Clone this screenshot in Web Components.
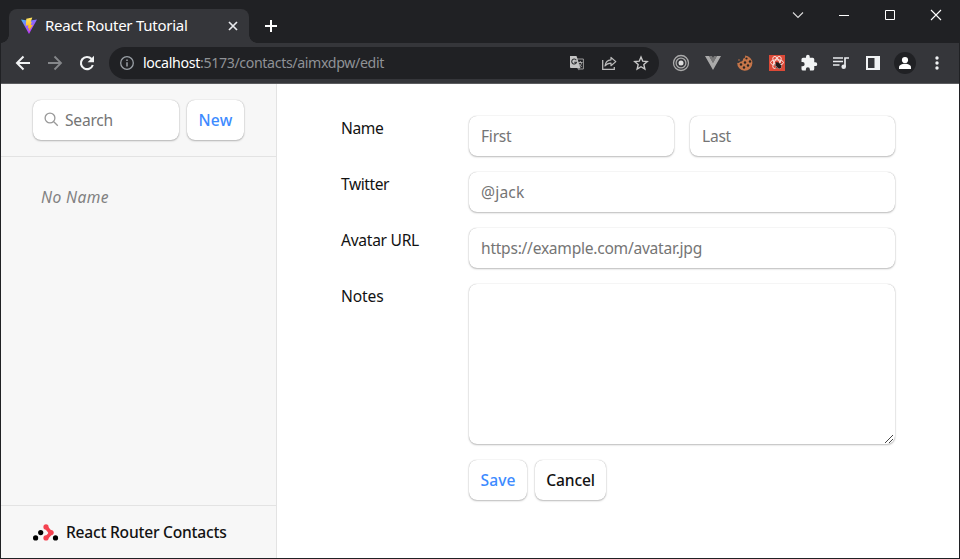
<!DOCTYPE html>
<html lang="en"><head><meta charset="utf-8"><title>React Router Tutorial</title>
<style>
html,body{margin:0;height:100%;overflow:hidden}
body{font-family:"Noto Sans","Open Sans",sans-serif;font-size:15.6px;line-height:24px;color:#121212;background:#202124}
</style></head><body>
<browser-window></browser-window>
<script>
const define=(name,html,setup)=>{
  const t=document.createElement('template');t.innerHTML=html;
  customElements.define(name,class extends HTMLElement{
    connectedCallback(){
      if(this.shadowRoot)return;
      this.attachShadow({mode:'open'}).append(t.content.cloneNode(true));
      if(setup)setup(this);
    }
  });
};

/* Text tracked so that it fills the width given in "w". */
define('fit-text',`<style>:host{display:inline-block;white-space:pre;flex:none}span{display:inline-block}</style><span><slot></slot></span>`,el=>{
  const w=+el.getAttribute('w'),s=el.shadowRoot.querySelector('span');
  const n=el.textContent.length,natural=s.getBoundingClientRect().width;
  s.style.letterSpacing=((w-natural)/n)+'px';
  el.style.width=w+'px';
});

const icons={
  vite:'<svg width="18" height="18" viewBox="0 0 18 18"><defs><linearGradient id="a" x1="0" y1="0" x2=".6" y2="1"><stop stop-color="#41bdf5"/><stop offset=".45" stop-color="#8b6cff"/><stop offset="1" stop-color="#c12fff"/></linearGradient><linearGradient id="b" x1="0" y1="0" x2="0" y2="1"><stop stop-color="#ffe766"/><stop offset="1" stop-color="#ffa800"/></linearGradient></defs><path d="M1 2.5 9 3.800l8-1.300L9 17z" fill="url(#a)"/><path d="M12.300 .500 6.300 1.800 5.800 8.700l2.600-.4-.6 3.200 1.600-.4-.8 3.700 4.400-7-2.300.4 1-3.300-1 .2z" fill="url(#b)"/></svg>',
  x:'<svg width="16" height="16" viewBox="0 0 16 16"><path d="m4 4 8 8m0-8-8 8" stroke="#e8eaed" stroke-width="1.7"/></svg>',
  plus:'<svg width="16" height="16" viewBox="0 0 16 16"><path d="M8 2v12M2 8h12" stroke="#fff" stroke-width="2"/></svg>',
  down:'<svg width="16" height="16" viewBox="0 0 16 16"><path d="m3 5.5 5 5 5-5" fill="none" stroke="#ddd" stroke-width="1.1"/></svg>',
  min:'<svg width="16" height="16" viewBox="0 0 16 16"><path d="M3 8.5h10" stroke="#fff"/></svg>',
  max:'<svg width="16" height="16" viewBox="0 0 16 16"><path d="M3.500 3.500h9v9h-9z" fill="none" stroke="#fff"/></svg>',
  quit:'<svg width="16" height="16" viewBox="0 0 16 16"><path d="m3 3 10 10m0-10L3 13" stroke="#fff" stroke-width="1.1"/></svg>',
  back:'<svg width="18" height="18" viewBox="0 0 18 18"><path d="M16 9H3m6.500-6.500L3 9l6.500 6.500" fill="none" stroke="#f1f3f4" stroke-width="2"/></svg>',
  forward:'<svg width="18" height="18" viewBox="0 0 18 18"><path d="M2 9h13M8.500 2.500 15 9l-6.500 6.500" fill="none" stroke="#85878a" stroke-width="1.8"/></svg>',
  reload:'<svg width="18" height="18" viewBox="0 0 18 18"><path d="M14.800 11A6.100 6.100 0 1 1 13.600 5" fill="none" stroke="#f1f3f4" stroke-width="2.100"/><path d="M16 1.800v6.400H9.600z" fill="#f1f3f4"/></svg>',
  info:'<svg width="16" height="16" viewBox="0 0 16 16"><circle cx="8" cy="8" r="6.300" fill="none" stroke="#9aa0a6" stroke-width="1.300"/><path d="M8 7.200v4.200M8 4.500V6" stroke="#9aa0a6" stroke-width="1.500"/></svg>',
  translate:'<svg width="16" height="16" viewBox="0 0 16 16"><path d="M6 4h8.400v10H9.500" fill="none" stroke="#999" stroke-width="1"/><path d="M1 1h6.500l4 12H2a1 1 0 0 1-1-1z" fill="#c4c4c4"/><path d="M7.300 5.200A2.500 2.500 0 1 0 7.600 7.200H5.200" fill="none" stroke="#303134" stroke-width="1.100"/><path d="M9 7.500h4.500M11.300 6v1.500m1.400 0c-.3 1.800-1.300 3-2.700 4m-.2-3c.5 1.500 1.500 2.500 3 3" fill="none" stroke="#aaa"/><path d="m8 13 2 2.500.8-2.500" fill="#888"/></svg>',
  share:'<svg width="16" height="16" viewBox="0 0 16 16"><path d="M1.700 5v9.300h11.600V12" fill="none" stroke="#bbb" stroke-width="1.300"/><path d="M10 2.500v2.300C6.500 5 4.500 7.200 4 11c1.500-2 3.200-2.800 6-2.800v2.500l4.800-4.100z" fill="none" stroke="#bbb" stroke-width="1.200" stroke-linejoin="round"/></svg>',
  star:'<svg width="16" height="16" viewBox="0 0 16 16"><path d="m8 2 1.750 4.200 4.500.4-3.400 3 1 4.400L8 11.700 4.150 14l1-4.400-3.400-3 4.500-.4z" fill="none" stroke="#c8c8c8" stroke-width="1.400"/></svg>',
  target:'<svg width="18" height="18" viewBox="0 0 18 18" fill="none" stroke="#aaa" stroke-width="1.300"><circle cx="9" cy="9" r="7.500"/><circle cx="9" cy="9" r="4.900"/><circle cx="9" cy="9" r="2.500" fill="#ddd" stroke="none"/></svg>',
  vue:'<svg width="18" height="18" viewBox="0 0 18 18"><path d="M1 2h4.200L9 8.700 12.800 2H17L9 16z" fill="#aaa"/><path d="M5 2h3l1 1.700L10 2h3L9 9z" fill="#777"/></svg>',
  cookie:'<svg width="18" height="18" viewBox="0 0 18 18"><path d="M9 1.500a2.600 2.600 0 0 1-2 3.200 2.600 2.600 0 0 1-3 3.100 2.300 2.300 0 0 1-2.800 1A7.600 7.600 0 1 0 9 1.500z" fill="#c57549"/><g fill="#292421"><circle cx="10.500" cy="4.500" r="1.100"/><circle cx="14" cy="7.500" r="1.200"/><circle cx="9" cy="8.500" r="1.200"/><circle cx="5" cy="10.500" r="1.200"/><circle cx="12" cy="11.500" r="1.200"/><circle cx="8" cy="13.500" r="1.200"/></g><circle cx="3" cy="6" r=".8" fill="#c57549"/></svg>',
  react:'<svg width="16" height="16" viewBox="0 0 16 16"><path d="M0 0h16v16H0z" fill="#dc4937"/><g fill="none" stroke="#fbe3df" stroke-width="1"><ellipse cx="8" cy="7.500" rx="6.500" ry="2.700"/><ellipse cx="8" cy="7.500" rx="6.500" ry="2.700" transform="rotate(60 8 7.500)"/><ellipse cx="8" cy="7.500" rx="6.500" ry="2.700" transform="rotate(120 8 7.500)"/></g><ellipse cx="9.500" cy="10.500" rx="2.200" ry="3.500" transform="rotate(-35 9.500 10.500)" fill="#241c1b"/><path d="m5.500 10 7 .8m-6 2.500 5.500-5.500M7 7l3 6" stroke="#241c1b" stroke-width=".9"/></svg>',
  puzzle:'<svg width="18" height="18" viewBox="0 0 24 24"><path fill="#f1f3f4" d="M20.500 11H19V7a2 2 0 0 0-2-2h-4V3.500a2.500 2.500 0 0 0-5 0V5H4a2 2 0 0 0-2 2v3.800h1.500a2.700 2.700 0 0 1 0 5.400H2V20a2 2 0 0 0 2 2h3.800v-1.500a2.700 2.700 0 0 1 5.400 0V22H17a2 2 0 0 0 2-2v-4h1.500a2.500 2.500 0 0 0 0-5z"/></svg>',
  music:'<svg width="18" height="18" viewBox="0 0 18 18"><path d="M1 4h10M1 7.500h10M1 11h6.500M13 13V4h4" fill="none" stroke="#e8eaed" stroke-width="1.700"/><circle cx="11.700" cy="12.700" r="2.300" fill="#e8eaed"/></svg>',
  panel:'<svg width="16" height="16" viewBox="0 0 16 16"><path d="M1 1h14v14H1zM3 3v10h6.500V3z" fill="#f1f3f4" fill-rule="evenodd"/></svg>',
  user:'<svg width="22" height="22" viewBox="0 0 22 22"><circle cx="11" cy="11" r="11" fill="#202124"/><circle cx="11" cy="8" r="3.100" fill="#fff"/><path d="M5 17v-1.500c0-2.400 3-3.700 6-3.700s6 1.300 6 3.700V17z" fill="#fff"/></svg>',
  dots:'<svg width="16" height="16" viewBox="0 0 16 16" fill="#f1f3f4"><circle cx="8" cy="3" r="1.700"/><circle cx="8" cy="8" r="1.700"/><circle cx="8" cy="13" r="1.700"/></svg>',
  search:'<svg width="16" height="16" viewBox="0 0 16 16" fill="none" stroke="#999" stroke-width="1.300"><circle cx="7" cy="6" r="4.900"/><path d="m10.500 9.500 4.300 4.200"/></svg>',
  router:'<svg width="26" height="18" viewBox="0 0 26 18"><path d="M13.300 3.500 18 9l-4.700 5" fill="none" stroke="#f44250" stroke-width="3.600"/><g fill="#f44250"><circle cx="13" cy="2.900" r="2.600"/><circle cx="18" cy="8.600" r="2.700"/><circle cx="13" cy="13.900" r="2.600"/></g><circle cx="2.600" cy="13.900" r="2.600"/><circle cx="7.700" cy="8.600" r="2.600"/><circle cx="22.500" cy="13.900" r="2.600"/></svg>',
  grip:'<svg width="10" height="10" viewBox="0 0 10 10" shape-rendering="crispEdges" fill="#444"><path d="M0 8h1v1H0zm1-1h1v1H1zm1-1h1v1H2zm1-1h1v1H3zm1-1h1v1H4zm1-1h1v1H5zm1-1h1v1H6zm1-1h1v1H7zM4 8h1v1H4zm1-1h1v1H5zm1-1h1v1H6zm1-1h1v1H7z"/></svg>'
};
define('ui-icon',`<style>:host{display:flex;align-items:center;justify-content:center;flex:none;width:32px;height:32px}svg{display:block}</style>`,el=>{
  el.shadowRoot.append(document.createRange().createContextualFragment(icons[el.getAttribute('name')]));
});

define('tab-strip',`<style>
:host{display:flex;height:43px;background:#202124;align-items:flex-end;color:#fff}
.tab{position:relative;display:flex;align-items:center;box-sizing:border-box;width:240px;height:34px;margin-left:8px;padding-left:11px;border-radius:8px 8px 0 0;background:#35363a}
.tab:before,.tab:after{content:"";position:absolute;bottom:0;width:8px;height:8px}
.tab:before{left:-8px;background:radial-gradient(circle at 0 0,transparent 7.500px,#35363a 8px)}
.tab:after{right:-8px;background:radial-gradient(circle at 100% 0,transparent 7.500px,#35363a 8px)}
.tab ui-icon{width:18px}.tab fit-text{margin:-2px 0 0 7px;font-size:15px}.tab .close{width:16px;margin-left:auto;margin-right:8px}
.plus{width:44px;height:34px}.controls{display:flex;margin-left:auto;height:43px}.controls ui-icon{width:46px;height:30px}
</style><div class="tab"><ui-icon name="vite"></ui-icon><fit-text w="142.500">React Router Tutorial</fit-text><ui-icon class="close" name="x"></ui-icon></div><ui-icon class="plus" name="plus"></ui-icon>
<div class="controls"><ui-icon name="down"></ui-icon><ui-icon name="min"></ui-icon><ui-icon name="max"></ui-icon><ui-icon name="quit"></ui-icon></div>`);

define('address-bar',`<style>
:host{display:flex;align-items:center;box-sizing:border-box;height:41px;padding:0 6px;background:#35363a;border-bottom:1px solid #5b5c5f}
.box{display:flex;align-items:center;height:32px;width:550px;margin:0 6px;box-sizing:border-box;padding:0 2px;border-radius:16px;background:#202124;font-size:14.200px;color:#8f9296}
.host{color:#fff}.gap{flex:1}
</style><ui-icon name="back"></ui-icon><ui-icon name="forward"></ui-icon><ui-icon name="reload"></ui-icon>
<div class="box"><ui-icon name="info"></ui-icon><fit-text class="host" w="57">localhost</fit-text><fit-text w="184">:5173/contacts/aimxdpw/edit</fit-text><span class="gap"></span><ui-icon name="translate"></ui-icon><ui-icon name="share"></ui-icon><ui-icon name="star"></ui-icon></div>
<ui-icon name="target"></ui-icon><ui-icon name="vue"></ui-icon><ui-icon name="cookie"></ui-icon><ui-icon name="react"></ui-icon><ui-icon name="puzzle"></ui-icon><ui-icon name="music"></ui-icon><ui-icon name="panel"></ui-icon><ui-icon name="user"></ui-icon><ui-icon name="dots"></ui-icon>`);

const surface='box-sizing:border-box;height:40px;border-radius:8px;background:#fff;box-shadow:0 0 1px rgba(0,0,0,.3),0 1px 2px rgba(0,0,0,.25);';
define('text-field',`<style>:host{display:flex;align-items:center;position:relative;${surface}padding:0 12px 1px;color:#757575}</style><slot></slot>`);
define('push-button',`<style>:host{display:flex;align-items:center;justify-content:center;${surface}padding-bottom:1px;font-weight:500;color:#121212}:host([primary]){color:#3d8bff}</style><slot></slot>`);

define('contact-sidebar',`<style>
:host{display:flex;flex-direction:column;box-sizing:border-box;width:276px;background:#f7f7f7;border-right:1px solid #e3e3e3}
.top{display:flex;gap:8px;box-sizing:border-box;height:73px;padding:16px 32px;border-bottom:1px solid #e3e3e3}
.top text-field{width:146px;padding-left:10px}.top ui-icon{width:16px;margin:0 6px 0 0}.top push-button{width:57px}
nav{flex:1;padding:28px 40px;font-style:italic;color:#818181}
footer{display:flex;align-items:center;box-sizing:border-box;height:53px;padding:0 32px;gap:7px;border-top:1px solid #e3e3e3;font-weight:500}
footer ui-icon{width:26px;margin-top:2px}
</style><div class="top"><text-field><ui-icon name="search"></ui-icon><fit-text w="48">Search</fit-text></text-field><push-button primary><fit-text w="34">New</fit-text></push-button></div>
<nav><fit-text w="68">No Name</fit-text></nav><footer><ui-icon name="router"></ui-icon><fit-text w="160.500">React Router Contacts</fit-text></footer>`);

define('edit-form',`<style>
:host{display:grid;grid-template-columns:128px 426px;grid-template-rows:40px 40px 40px 160px 40px;gap:16px 0;flex:1;padding:32px 64px;background:#fff;align-content:start}
label{display:block}label fit-text{vertical-align:top}.pair{display:grid;grid-template-columns:205px 205px;gap:16px}
.notes{height:160px;align-items:flex-end;justify-content:flex-end;padding:0}.notes ui-icon{width:10px;height:10px}
.buttons{grid-column:2;display:flex;gap:8px}.save{width:58px}.cancel{width:71px}
</style>
<label><fit-text w="42.500">Name</fit-text></label><div class="pair"><text-field><fit-text w="30.500">First</fit-text></text-field><text-field><fit-text w="29">Last</fit-text></text-field></div>
<label><fit-text w="48">Twitter</fit-text></label><text-field><fit-text w="43.500">@jack</fit-text></text-field>
<label><fit-text w="78">Avatar URL</fit-text></label><text-field><fit-text w="221">https://example.com/avatar.jpg</fit-text></text-field>
<label><fit-text w="42.500">Notes</fit-text></label><text-field class="notes"><ui-icon name="grip"></ui-icon></text-field>
<div class="buttons"><push-button class="save" primary><fit-text w="35">Save</fit-text></push-button><push-button class="cancel"><fit-text w="48.500">Cancel</fit-text></push-button></div>`);

define('browser-window',`<style>
:host{display:flex;flex-direction:column;box-sizing:border-box;width:960px;height:559px;border:1px solid #202124;border-top:0}
main{display:flex;flex:1;min-height:0}
</style><tab-strip></tab-strip><address-bar></address-bar><main><contact-sidebar></contact-sidebar><edit-form></edit-form></main>`);
</script></body></html>
